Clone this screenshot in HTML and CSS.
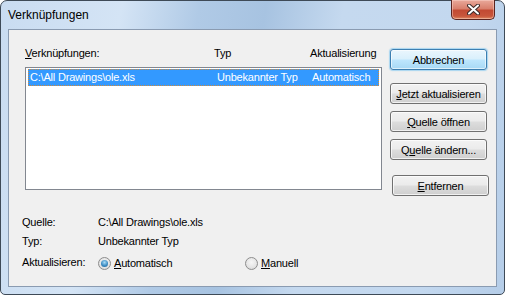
FILE: index.html
```html
<!DOCTYPE html>
<html lang="de">
<head>
    <meta charset="UTF-8">
    <title>Verknüpfungen</title>
    <link rel="stylesheet" href="styles.css">
</head>
<body>
    <div class="window">
        <div class="titlebar">
            <span class="title">Verknüpfungen</span>
            <button class="close" title="Schließen">
                <svg width="13" height="11" viewBox="0 0 13 11">
                    <path d="M2 1.5 L11 9.5 M11 1.5 L2 9.5" stroke="#3b2a28" stroke-width="4" stroke-linecap="round"/>
                    <path d="M2 1.5 L11 9.5 M11 1.5 L2 9.5" stroke="#ffffff" stroke-width="2" stroke-linecap="round"/>
                </svg>
            </button>
        </div>

        <div class="client">
            <div class="main">
                <div class="links">
                    <div class="list-head">
                        <span><u>V</u>erknüpfungen:</span>
                        <span>Typ</span>
                        <span>Aktualisierung</span>
                    </div>
                    <div class="listbox">
                        <div class="row selected">
                            <span>C:\All Drawings\ole.xls</span>
                            <span>Unbekannter Typ</span>
                            <span>Automatisch</span>
                        </div>
                    </div>
                </div>

                <div class="actions">
                    <button class="btn default">Abbrechen</button>
                    <button class="btn gap-lg"><u>J</u>etzt aktualisieren</button>
                    <button class="btn gap-sm"><u>Q</u>uelle öffnen</button>
                    <button class="btn gap-sm">Q<u>u</u>elle ändern...</button>
                    <button class="btn gap-lg shift"><u>E</u>ntfernen</button>
                </div>
            </div>

            <div class="info">
                <span>Quelle:</span>
                <span>C:\All Drawings\ole.xls</span>
                <span>Typ:</span>
                <span>Unbekannter Typ</span>
                <span>Aktualisieren:</span>
                <div class="options">
                    <label class="option first"><span class="radio checked"></span><span><u>A</u>utomatisch</span></label>
                    <label class="option"><span class="radio"></span><span><u>M</u>anuell</span></label>
                </div>
            </div>
        </div>
    </div>
</body>
</html>
```

FILE: styles.css
```css
* {
    box-sizing: border-box;
    margin: 0;
    padding: 0;
}

body {
    background: #ffffff;
    font-family: 'Liberation Sans', Arial, sans-serif;
    font-size: 11px;
    color: #000000;
}

u {
    text-decoration: underline;
    text-underline-offset: 1px;
}

.window {
    width: 505px;
    height: 295px;
    border: 1px solid #3e4a57;
    border-radius: 7px 7px 5px 5px;
    padding: 0 7px 7px 7px;
    display: flex;
    flex-direction: column;
    background: linear-gradient(100deg, #c9dcf1 0%, #d4e4f5 22%, #b0cae6 36%, #a7c3e1 48%, #c5d9ef 62%, #c3d8ef 85%, #b5cde8 100%);
}

/* title bar */
.titlebar {
    height: 28px;
    display: flex;
    justify-content: space-between;
    align-items: flex-start;
}

.title {
    margin-top: 7px;
    font-size: 12px;
    line-height: 15px;
    color: #000000;
}

.close {
    width: 44px;
    height: 20px;
    margin-top: -1px;
    margin-right: 2px;
    border: 1px solid #5a2420;
    border-top: none;
    border-radius: 0 0 5px 5px;
    background: linear-gradient(#e9a99b 0%, #d9806d 45%, #c24a33 55%, #c8563c 85%, #de8a62 100%);
    box-shadow: inset 0 0 0 1px rgba(255, 220, 210, 0.45);
    display: flex;
    align-items: center;
    justify-content: center;
}

/* client area */
.client {
    flex: 1;
    background: #f0f0f0;
    border: 1px solid #8a9bb1;
    padding: 17px 0 0 13px;
    letter-spacing: -0.2px;
}

.main {
    display: flex;
    align-items: flex-start;
}

.links {
    margin-left: 3px;
}

.list-head {
    display: grid;
    grid-template-columns: 189px 96px auto;
    line-height: 13px;
}

.listbox {
    width: 357px;
    height: 123px;
    margin-top: 7px;
    background: #ffffff;
    border: 1px solid #828790;
    padding: 1px 2px 0;
}

.row {
    display: grid;
    grid-template-columns: 187px 95px auto;
    height: 17px;
    line-height: 15px;
    padding-left: 1px;
    border: 1px dotted transparent;
}

.row.selected {
    background: #3399ff;
    color: #ffffff;
    border-color: #d08a3c;
}

/* buttons */
.actions {
    margin-left: 8px;
    padding-top: 2px;
    display: flex;
    flex-direction: column;
}

.btn {
    width: 97px;
    height: 21px;
    font-family: inherit;
    font-size: 11px;
    letter-spacing: inherit;
    color: #000000;
    border: 1px solid #707070;
    border-radius: 3px;
    background: linear-gradient(#f2f2f2 0%, #ebebeb 48%, #dddddd 52%, #cfcfcf 100%);
    box-shadow: inset 0 0 0 1px rgba(255, 255, 255, 0.7);
}

.btn.default {
    border-color: #3c7fb1;
    background: linear-gradient(#eaf6fd 0%, #d9f0fc 48%, #bee6fd 52%, #a7d9f5 100%);
    box-shadow: inset 0 0 0 1px rgba(255, 255, 255, 0.6), 0 0 1px 1px rgba(80, 180, 240, 0.45);
}

.btn.gap-lg {
    margin-top: 13px;
}

.btn.gap-sm {
    margin-top: 7px;
}

.btn.shift {
    margin-left: 2px;
    margin-top: 15px;
}

/* details */
.info {
    margin-top: 20px;
    display: grid;
    grid-template-columns: 76px auto;
    grid-template-rows: 19px 21px 14px;
    line-height: 13px;
}

.options {
    display: flex;
    align-items: center;
}

.option {
    display: flex;
    align-items: center;
    gap: 3px;
}

.option.first {
    width: 147px;
}

.radio {
    width: 13px;
    height: 13px;
    border-radius: 50%;
    border: 1px solid #8d8d8d;
    background: radial-gradient(circle at 50% 40%, #f6f6f6 0%, #e6e6e6 55%, #cfcfcf 100%);
    display: flex;
    align-items: center;
    justify-content: center;
}

.radio.checked::after {
    content: "";
    width: 7px;
    height: 7px;
    border-radius: 50%;
    background: radial-gradient(circle at 50% 35%, #a9dcf7 0%, #3f8ec4 55%, #1d5b8e 100%);
}
```
